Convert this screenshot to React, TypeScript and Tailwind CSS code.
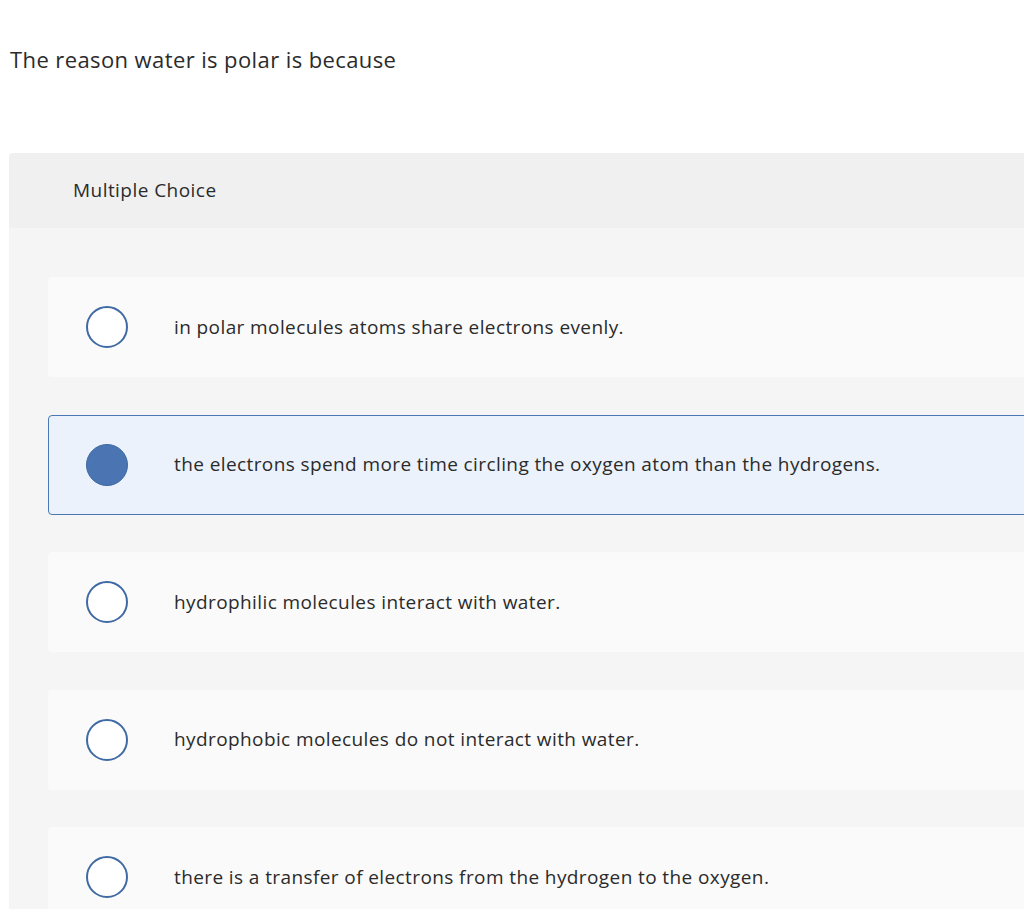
import React from "react";

const options = [
  "in polar molecules atoms share electrons evenly.",
  "the electrons spend more time circling the oxygen atom than the hydrogens.",
  "hydrophilic molecules interact with water.",
  "hydrophobic molecules do not interact with water.",
  "there is a transfer of electrons from the hydrogen to the oxygen.",
];

const selected = 1;

const App = () => {
  return (
    <div
      className="w-[1024px] h-[909px] overflow-hidden bg-white text-[#2b2b2b]"
      style={{ fontFamily: "'Open Sans', 'Liberation Sans', sans-serif" }}
    >
      <h1 className="pt-[45px] pl-[10px] text-[22px] leading-[28px] tracking-[0.4px]">
        The reason water is polar is because
      </h1>

      <div className="mt-[80px] ml-[9px] w-[1100px] rounded-tl-[4px] bg-[#f5f5f5]">
        {/* Header */}
        <div className="h-[75px] flex items-center pl-[64px] bg-[#f0f0f0] rounded-tl-[4px] text-[19px] tracking-[0.45px]">
          Multiple Choice
        </div>

        {/* Options */}
        <div className="pt-[49px] pl-[39px] flex flex-col gap-[37.5px]">
          {options.map((opt, i) => {
            const isSel = i === selected;
            return (
              <div
                key={i}
                className={
                  isSel
                    ? "h-[100px] flex items-center rounded-[4px] border border-[#4a77b6] bg-[#ebf2fb]"
                    : "h-[100px] flex items-center rounded-[4px] border border-transparent bg-[#fafafa]"
                }
              >
                <div
                  className={
                    isSel
                      ? "ml-[37px] w-[42px] h-[42px] rounded-full border border-[#3f6aa3] bg-[#4a74b2]"
                      : "ml-[37px] w-[42px] h-[42px] rounded-full border-2 border-[#3f6aa3] bg-white"
                  }
                />
                <span className="ml-[46px] text-[19px] tracking-[0.4px]">{opt}</span>
              </div>
            );
          })}
        </div>
      </div>
    </div>
  );
};

export default App;
